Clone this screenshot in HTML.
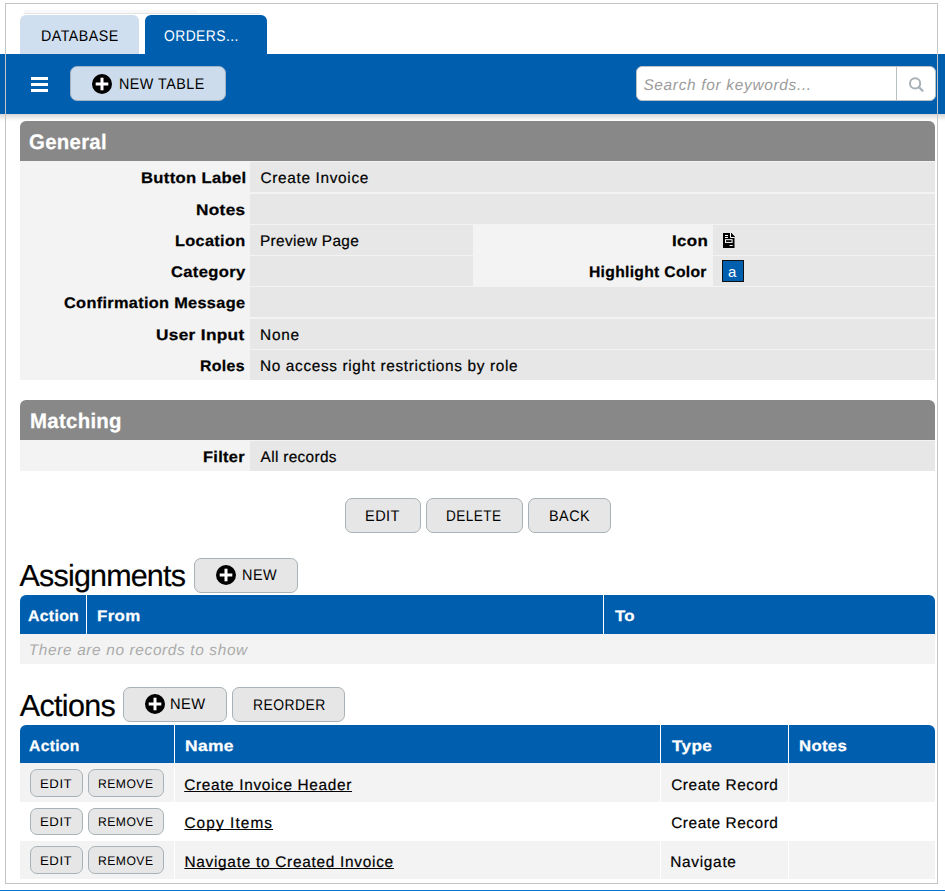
<!DOCTYPE html>
<html><head><meta charset="utf-8">
<style>
*{box-sizing:border-box;margin:0;padding:0}
html,body{width:945px;height:891px;overflow:hidden;background:#fff;font-family:"Liberation Sans",sans-serif;color:#000}
.a{position:absolute}
.t{position:absolute;white-space:nowrap;line-height:1}
.frame{position:absolute;left:5px;top:3px;width:933px;height:881px;border:1px solid #c4c4c4;z-index:50}
.bar{left:0;top:54px;width:945px;height:60px;background:#005eae}
.shadow{left:0;top:114px;width:945px;height:7px;background:linear-gradient(#d8d8d8,#fff)}
.tab{top:15px;height:39px;border-radius:6px 6px 0 0}
.btn{position:absolute;background:#e6e6e6;border:1px solid #a9b2b6;border-radius:7px}
.hdr{position:absolute;left:20px;width:915px;height:40px;background:#888;border-radius:6px 6px 0 0}
.lab{position:absolute;background:#f3f3f3}
.val{position:absolute;background:#e7e7e7}
.th{position:absolute;background:#005eae}
.vl{position:absolute;width:1px;background:#fff}
</style></head><body>
<div class="a" style="left:24px;top:10px;width:173px;height:3px;background:#f8f8f8"></div>
<div class="a" style="left:24px;top:13px;width:236px;height:1px;background:#e4e4e4"></div>
<div class="a tab" style="left:20px;width:119px;background:#cfdff0"></div>
<div class="a tab" style="left:145px;width:122px;background:#005eae"></div>
<div class="a bar"></div>
<div class="a shadow"></div>
<div class="a" style="left:31px;top:77px;width:17px;height:3px;background:#fff"></div>
<div class="a" style="left:31px;top:83px;width:17px;height:3px;background:#fff"></div>
<div class="a" style="left:31px;top:89px;width:17px;height:3px;background:#fff"></div>
<div class="btn" style="left:70px;top:66px;width:156px;height:35px;background:#cddcec;border-color:#9fb3c6"></div>
<svg class="a" style="left:92px;top:74px" width="20" height="20" viewBox="0 0 20 20"><circle cx="10" cy="10" r="10" fill="#000"/><rect x="3.7" y="8.5" width="12.6" height="3" fill="#fff"/><rect x="8.5" y="3.7" width="3" height="12.6" fill="#fff"/></svg>
<div class="a" style="left:636px;top:66px;width:300px;height:35px;background:#fff;border:1px solid #b9c0c4;border-radius:6px"></div>
<div class="a" style="left:896px;top:67px;width:1px;height:33px;background:#b9c0c4"></div>
<svg class="a" style="left:907px;top:76px" width="18" height="18" viewBox="0 0 18 18"><circle cx="8.1" cy="7.4" r="5.1" stroke="#a9b1b6" stroke-width="2" fill="none"/><line x1="11.8" y1="11.1" x2="15.6" y2="14.8" stroke="#a9b1b6" stroke-width="2.2" stroke-linecap="round"/></svg>

<div class="hdr" style="top:121px"></div>
<div class="lab" style="left:20px;top:161px;width:915px;height:219px"></div>
<div class="val" style="left:250px;top:162px;width:685px;height:30px"></div>
<div class="val" style="left:250px;top:194px;width:685px;height:30px"></div>
<div class="val" style="left:250px;top:225px;width:223px;height:30px"></div>
<div class="val" style="left:713px;top:225px;width:222px;height:30px"></div>
<div class="val" style="left:250px;top:256px;width:223px;height:30px"></div>
<div class="val" style="left:713px;top:256px;width:222px;height:30px"></div>
<div class="val" style="left:250px;top:287px;width:685px;height:30px"></div>
<div class="val" style="left:250px;top:319px;width:685px;height:30px"></div>
<div class="val" style="left:250px;top:350px;width:685px;height:30px"></div>
<svg class="a" style="left:723px;top:233px" width="12" height="15" viewBox="0 0 12 15"><path d="M0 0H8.3L11.5 3.6V15H0Z" fill="#000"/><path d="M7.5 0V4.5H11.5" stroke="#fff" stroke-width="1" fill="none"/><path d="M8 0H8.3L11.5 3.6V4H8Z" fill="#000"/><rect x="2" y="2" width="3" height="1" fill="#fff"/><rect x="2" y="4" width="3" height="1" fill="#fff"/><rect x="2.5" y="6.7" width="6.6" height="2.7" fill="none" stroke="#fff" stroke-width="1"/><rect x="6.5" y="12" width="3.2" height="1" fill="#fff"/></svg>
<div class="a" style="left:722px;top:260px;width:22px;height:22px;background:#005eae;border:1.5px solid #111"></div>
<div class="t" style="left:728px;top:264px;font-size:15px;color:#fff">a</div>

<div class="hdr" style="top:400px"></div>
<div class="lab" style="left:20px;top:440px;width:915px;height:31px"></div>
<div class="val" style="left:250px;top:441px;width:685px;height:30px"></div>

<div class="btn" style="left:345px;top:498px;width:76px;height:35px"></div>
<div class="btn" style="left:426px;top:498px;width:97px;height:35px"></div>
<div class="btn" style="left:528px;top:498px;width:83px;height:35px"></div>

<div class="btn" style="left:194px;top:558px;width:104px;height:35px"></div>
<svg class="a" style="left:216px;top:565px" width="20" height="20" viewBox="0 0 20 20"><circle cx="10" cy="10" r="10" fill="#000"/><rect x="3.7" y="8.5" width="12.6" height="3" fill="#fff"/><rect x="8.5" y="3.7" width="3" height="12.6" fill="#fff"/></svg>
<div class="th" style="left:20px;top:595px;width:915px;height:39px;border-radius:6px 6px 0 0"></div>
<div class="vl" style="left:86px;top:595px;height:39px"></div>
<div class="vl" style="left:603px;top:595px;height:39px"></div>
<div class="lab" style="left:20px;top:634px;width:915px;height:30px"></div>

<div class="btn" style="left:123px;top:687px;width:104px;height:35px"></div>
<svg class="a" style="left:145px;top:694px" width="20" height="20" viewBox="0 0 20 20"><circle cx="10" cy="10" r="10" fill="#000"/><rect x="3.7" y="8.5" width="12.6" height="3" fill="#fff"/><rect x="8.5" y="3.7" width="3" height="12.6" fill="#fff"/></svg>
<div class="btn" style="left:232px;top:687px;width:113px;height:35px"></div>
<div class="th" style="left:20px;top:725px;width:915px;height:38px;border-radius:6px 6px 0 0"></div>
<div class="vl" style="left:174px;top:725px;height:38px"></div>
<div class="vl" style="left:660px;top:725px;height:38px"></div>
<div class="vl" style="left:788px;top:725px;height:38px"></div>

<div class="lab" style="left:20px;top:763px;width:915px;height:39px"></div>
<div class="lab" style="left:20px;top:841px;width:915px;height:38px"></div>
<div class="vl" style="left:174px;top:763px;height:116px"></div>
<div class="vl" style="left:660px;top:763px;height:116px"></div>
<div class="vl" style="left:788px;top:763px;height:116px"></div>

<div class="btn" style="left:30px;top:769px;width:53px;height:28px"></div>
<div class="btn" style="left:88px;top:769px;width:76px;height:28px"></div>
<div class="btn" style="left:30px;top:808px;width:53px;height:27px"></div>
<div class="btn" style="left:88px;top:808px;width:76px;height:27px"></div>
<div class="btn" style="left:30px;top:846px;width:53px;height:28px"></div>
<div class="btn" style="left:88px;top:846px;width:76px;height:28px"></div>

<div class="t" id="t_db" style="left:40.80px;top:29px;font-size:15.4px;letter-spacing:0.500px;text-rendering:geometricPrecision;transform:scaleX(0.9258);transform-origin:0 0;-webkit-text-stroke:0px currentColor;">DATABASE</div>
<div class="t" id="t_ord" style="left:164.20px;top:29px;font-size:15.4px;letter-spacing:0.500px;text-rendering:geometricPrecision;transform:scaleX(0.8994);transform-origin:0 0;-webkit-text-stroke:0px currentColor;color:#fff">ORDERS...</div>
<div class="t" id="t_nt" style="left:119.20px;top:77px;font-size:15.4px;letter-spacing:0.500px;text-rendering:geometricPrecision;transform:scaleX(0.9319);transform-origin:0 0;-webkit-text-stroke:0px currentColor;">NEW TABLE</div>
<div class="t" id="t_srch" style="left:643.40px;top:78px;font-size:15.4px;letter-spacing:0.697px;font-style:italic;text-rendering:geometricPrecision;color:#9b9b9b">Search for keywords...</div>
<div class="t" id="t_gen" style="left:29.40px;top:132px;font-size:21px;letter-spacing:0.300px;font-weight:bold;text-rendering:geometricPrecision;transform:scaleX(0.9707);transform-origin:0 0;-webkit-text-stroke:0.25px currentColor;color:#fff">General</div>
<div class="t" id="l1" style="left:140.60px;top:171px;font-size:15.4px;letter-spacing:0.300px;font-weight:bold;text-rendering:geometricPrecision;transform:scaleX(1.0811);transform-origin:0 0;-webkit-text-stroke:0.25px currentColor;">Button Label</div>
<div class="t" id="l2" style="left:196.20px;top:203px;font-size:15.4px;letter-spacing:0.300px;font-weight:bold;text-rendering:geometricPrecision;transform:scaleX(1.1170);transform-origin:0 0;-webkit-text-stroke:0.25px currentColor;">Notes</div>
<div class="t" id="l3" style="left:175.40px;top:234px;font-size:15.4px;letter-spacing:0.300px;font-weight:bold;text-rendering:geometricPrecision;transform:scaleX(1.0590);transform-origin:0 0;-webkit-text-stroke:0.25px currentColor;">Location</div>
<div class="t" id="l4" style="left:170.60px;top:265px;font-size:15.4px;letter-spacing:0.300px;font-weight:bold;text-rendering:geometricPrecision;transform:scaleX(1.0780);transform-origin:0 0;-webkit-text-stroke:0.25px currentColor;">Category</div>
<div class="t" id="l5" style="left:63.80px;top:296px;font-size:15.4px;letter-spacing:0.300px;font-weight:bold;text-rendering:geometricPrecision;transform:scaleX(1.0600);transform-origin:0 0;-webkit-text-stroke:0.25px currentColor;">Confirmation Message</div>
<div class="t" id="l6" style="left:156.20px;top:328px;font-size:15.4px;letter-spacing:0.300px;font-weight:bold;text-rendering:geometricPrecision;transform:scaleX(1.1190);transform-origin:0 0;-webkit-text-stroke:0.25px currentColor;">User Input</div>
<div class="t" id="l7" style="left:200.00px;top:359px;font-size:15.4px;letter-spacing:0.300px;font-weight:bold;text-rendering:geometricPrecision;transform:scaleX(1.0324);transform-origin:0 0;-webkit-text-stroke:0.25px currentColor;">Roles</div>
<div class="t" id="l8" style="left:671.60px;top:234px;font-size:15.4px;letter-spacing:0.300px;font-weight:bold;text-rendering:geometricPrecision;transform:scaleX(1.0986);transform-origin:0 0;-webkit-text-stroke:0.25px currentColor;">Icon</div>
<div class="t" id="l9" style="left:589.00px;top:265px;font-size:15.4px;letter-spacing:0.300px;font-weight:bold;text-rendering:geometricPrecision;transform:scaleX(1.0179);transform-origin:0 0;-webkit-text-stroke:0.25px currentColor;">Highlight Color</div>
<div class="t" id="v1" style="left:260.40px;top:171px;font-size:15.4px;letter-spacing:0.673px;text-rendering:geometricPrecision;-webkit-text-stroke:0.2px currentColor;">Create Invoice</div>
<div class="t" id="v3" style="left:260.00px;top:234px;font-size:15.4px;letter-spacing:0.348px;text-rendering:geometricPrecision;-webkit-text-stroke:0.2px currentColor;">Preview Page</div>
<div class="t" id="v6" style="left:260.00px;top:328px;font-size:15.4px;letter-spacing:0.771px;text-rendering:geometricPrecision;-webkit-text-stroke:0.2px currentColor;">None</div>
<div class="t" id="v7" style="left:260.00px;top:359px;font-size:15.4px;letter-spacing:0.637px;text-rendering:geometricPrecision;-webkit-text-stroke:0.2px currentColor;">No access right restrictions by role</div>
<div class="t" id="t_mat" style="left:30.00px;top:411px;font-size:21px;letter-spacing:0.300px;font-weight:bold;text-rendering:geometricPrecision;transform:scaleX(0.9713);transform-origin:0 0;-webkit-text-stroke:0.25px currentColor;color:#fff">Matching</div>
<div class="t" id="l10" style="left:202.80px;top:450px;font-size:15.4px;letter-spacing:0.300px;font-weight:bold;text-rendering:geometricPrecision;transform:scaleX(1.0615);transform-origin:0 0;-webkit-text-stroke:0.25px currentColor;">Filter</div>
<div class="t" id="v10" style="left:260.60px;top:450px;font-size:15.4px;letter-spacing:0.320px;text-rendering:geometricPrecision;-webkit-text-stroke:0.2px currentColor;">All records</div>
<div class="t" id="b_edit" style="left:365.20px;top:509px;font-size:15.4px;letter-spacing:0.500px;text-rendering:geometricPrecision;transform:scaleX(0.9435);transform-origin:0 0;-webkit-text-stroke:0px currentColor;">EDIT</div>
<div class="t" id="b_del" style="left:446.40px;top:509px;font-size:15.4px;letter-spacing:0.500px;text-rendering:geometricPrecision;transform:scaleX(0.8819);transform-origin:0 0;-webkit-text-stroke:0px currentColor;">DELETE</div>
<div class="t" id="b_back" style="left:548.60px;top:509px;font-size:15.4px;letter-spacing:0.500px;text-rendering:geometricPrecision;transform:scaleX(0.9364);transform-origin:0 0;-webkit-text-stroke:0px currentColor;">BACK</div>
<div class="t" id="h_asg" style="left:19.60px;top:561px;font-size:30.5px;letter-spacing:-0.830px;text-rendering:geometricPrecision;-webkit-text-stroke:0.2px currentColor;">Assignments</div>
<div class="t" id="b_new1" style="left:242.00px;top:568px;font-size:15.4px;letter-spacing:0.500px;text-rendering:geometricPrecision;transform:scaleX(0.9386);transform-origin:0 0;-webkit-text-stroke:0px currentColor;">NEW</div>
<div class="t" id="th1" style="left:28.20px;top:609px;font-size:15.4px;letter-spacing:0.300px;font-weight:bold;text-rendering:geometricPrecision;transform:scaleX(1.0283);transform-origin:0 0;-webkit-text-stroke:0.25px currentColor;color:#fff">Action</div>
<div class="t" id="th2" style="left:96.60px;top:609px;font-size:15.4px;letter-spacing:0.300px;font-weight:bold;text-rendering:geometricPrecision;transform:scaleX(1.0971);transform-origin:0 0;-webkit-text-stroke:0.25px currentColor;color:#fff">From</div>
<div class="t" id="th3" style="left:614.60px;top:609px;font-size:15.4px;letter-spacing:0.300px;font-weight:bold;text-rendering:geometricPrecision;transform:scaleX(1.0923);transform-origin:0 0;-webkit-text-stroke:0.25px currentColor;color:#fff">To</div>
<div class="t" id="t_empty" style="left:28.80px;top:643px;font-size:15.4px;letter-spacing:0.644px;font-style:italic;text-rendering:geometricPrecision;color:#ababab">There are no records to show</div>
<div class="t" id="h_act" style="left:19.80px;top:691px;font-size:30.5px;letter-spacing:-0.666px;text-rendering:geometricPrecision;-webkit-text-stroke:0.2px currentColor;">Actions</div>
<div class="t" id="b_new2" style="left:170.20px;top:697px;font-size:15.4px;letter-spacing:0.500px;text-rendering:geometricPrecision;transform:scaleX(0.9537);transform-origin:0 0;-webkit-text-stroke:0px currentColor;">NEW</div>
<div class="t" id="b_reo" style="left:252.80px;top:698px;font-size:15.4px;letter-spacing:0.500px;text-rendering:geometricPrecision;transform:scaleX(0.9027);transform-origin:0 0;-webkit-text-stroke:0px currentColor;">REORDER</div>
<div class="t" id="th4" style="left:28.60px;top:739px;font-size:15.4px;letter-spacing:0.300px;font-weight:bold;text-rendering:geometricPrecision;transform:scaleX(1.0187);transform-origin:0 0;-webkit-text-stroke:0.25px currentColor;color:#fff">Action</div>
<div class="t" id="th5" style="left:184.60px;top:739px;font-size:15.4px;letter-spacing:0.300px;font-weight:bold;text-rendering:geometricPrecision;transform:scaleX(1.1334);transform-origin:0 0;-webkit-text-stroke:0.25px currentColor;color:#fff">Name</div>
<div class="t" id="th6" style="left:671.60px;top:739px;font-size:15.4px;letter-spacing:0.300px;font-weight:bold;text-rendering:geometricPrecision;transform:scaleX(1.1150);transform-origin:0 0;-webkit-text-stroke:0.25px currentColor;color:#fff">Type</div>
<div class="t" id="th7" style="left:798.60px;top:739px;font-size:15.4px;letter-spacing:0.300px;font-weight:bold;text-rendering:geometricPrecision;transform:scaleX(1.0879);transform-origin:0 0;-webkit-text-stroke:0.25px currentColor;color:#fff">Notes</div>
<div class="t" id="e1" style="left:40.20px;top:778px;font-size:12.5px;letter-spacing:0.500px;text-rendering:geometricPrecision;transform:scaleX(1.0575);transform-origin:0 0;-webkit-text-stroke:0px currentColor;">EDIT</div>
<div class="t" id="rm1" style="left:98.00px;top:778px;font-size:12.5px;letter-spacing:0.500px;text-rendering:geometricPrecision;transform:scaleX(0.9703);transform-origin:0 0;-webkit-text-stroke:0px currentColor;">REMOVE</div>
<div class="t" id="e2" style="left:40.20px;top:816px;font-size:12.5px;letter-spacing:0.500px;text-rendering:geometricPrecision;transform:scaleX(1.0575);transform-origin:0 0;-webkit-text-stroke:0px currentColor;">EDIT</div>
<div class="t" id="rm2" style="left:98.00px;top:816px;font-size:12.5px;letter-spacing:0.500px;text-rendering:geometricPrecision;transform:scaleX(0.9703);transform-origin:0 0;-webkit-text-stroke:0px currentColor;">REMOVE</div>
<div class="t" id="e3" style="left:40.20px;top:855px;font-size:12.5px;letter-spacing:0.500px;text-rendering:geometricPrecision;transform:scaleX(1.0575);transform-origin:0 0;-webkit-text-stroke:0px currentColor;">EDIT</div>
<div class="t" id="rm3" style="left:98.00px;top:855px;font-size:12.5px;letter-spacing:0.500px;text-rendering:geometricPrecision;transform:scaleX(0.9703);transform-origin:0 0;-webkit-text-stroke:0px currentColor;">REMOVE</div>
<div class="t" id="n1" style="left:184.20px;top:778px;font-size:15.4px;letter-spacing:0.660px;text-rendering:geometricPrecision;-webkit-text-stroke:0.2px currentColor;;text-decoration:underline;text-decoration-skip-ink:none;">Create Invoice Header</div>
<div class="t" id="n2" style="left:184.40px;top:816px;font-size:15.4px;letter-spacing:1.089px;text-rendering:geometricPrecision;-webkit-text-stroke:0.2px currentColor;;text-decoration:underline;text-decoration-skip-ink:none;">Copy Items</div>
<div class="t" id="n3" style="left:184.40px;top:855px;font-size:15.4px;letter-spacing:0.724px;text-rendering:geometricPrecision;-webkit-text-stroke:0.2px currentColor;;text-decoration:underline;text-decoration-skip-ink:none;">Navigate to Created Invoice</div>
<div class="t" id="ty1" style="left:671.20px;top:778px;font-size:15.4px;letter-spacing:0.554px;text-rendering:geometricPrecision;-webkit-text-stroke:0.2px currentColor;">Create Record</div>
<div class="t" id="ty2" style="left:671.20px;top:816px;font-size:15.4px;letter-spacing:0.554px;text-rendering:geometricPrecision;-webkit-text-stroke:0.2px currentColor;">Create Record</div>
<div class="t" id="ty3" style="left:670.20px;top:855px;font-size:15.4px;letter-spacing:0.714px;text-rendering:geometricPrecision;-webkit-text-stroke:0.2px currentColor;">Navigate</div>
<div class="a" style="left:0;top:890px;width:945px;height:1px;background:#0a78d2"></div>
<div class="frame"></div>
</body></html>
